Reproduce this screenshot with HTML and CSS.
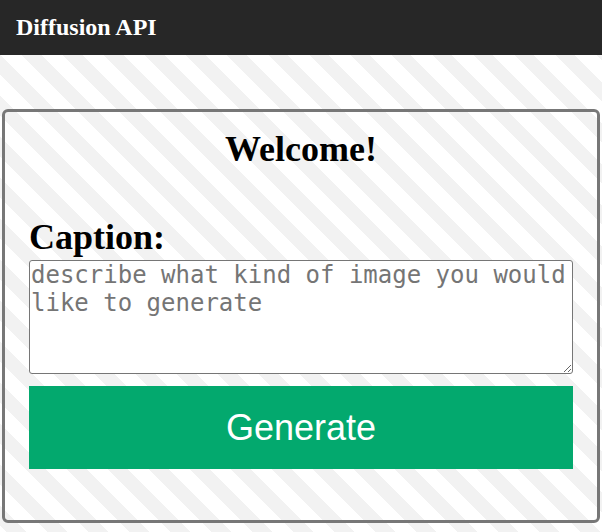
FILE: index.html
```html
<!DOCTYPE html>
<html lang="en">
<head>
<meta charset="utf-8">
<title>Diffusion API</title>
<link rel="stylesheet" href="styles.css">
</head>
<body>
<header class="topbar">Diffusion API</header>
<main class="page">
  <section class="card">
    <h1 class="welcome">Welcome!</h1>
    <label class="caption-label" for="caption">Caption:</label>
    <textarea id="caption" class="caption-input" placeholder="describe what kind of image you would like to generate"></textarea>
    <button class="generate-btn" type="button">Generate</button>
  </section>
</main>
</body>
</html>
```
FILE: styles.css
```css
html, body {
  margin: 0;
  padding: 0;
}
body {
  font-family: "Liberation Serif", "Times New Roman", serif;
  background: repeating-linear-gradient(45deg, #ffffff 0 4.8px, #f2f2f2 4.8px 18.8px, #ffffff 18.8px 29px);
  background-attachment: fixed;
  min-height: 532px;
}
.topbar {
  height: 55px;
  line-height: 55px;
  padding-left: 16px;
  background: #272727;
  color: #ffffff;
  font-weight: bold;
  font-size: 24px;
}
.page {
  padding: 54px 2px 8px 2px;
}
.card {
  border: 3px solid #777777;
  border-radius: 6px;
  padding: 17px 24px 51px 24px;
  display: flex;
  flex-direction: column;
}
.welcome {
  margin: 0;
  font-size: 36px;
  font-weight: bold;
  text-align: center;
  line-height: 40px;
}
.caption-label {
  margin-top: 48px;
  font-size: 36px;
  font-weight: bold;
  line-height: 40px;
}
.caption-input {
  margin-top: 3px;
  box-sizing: border-box;
  height: 114px;
  padding: 0 1px;
  font-family: "DejaVu Sans Mono", monospace;
  font-size: 24px;
  line-height: 28px;
  border: 1px solid #767676;
  border-radius: 3px;
  background: #ffffff;
}
.caption-input::placeholder {
  color: #757575;
}
.generate-btn {
  margin-top: 12px;
  height: 83px;
  border: none;
  border-radius: 0;
  background: #03a96e;
  color: #ffffff;
  font-family: "Liberation Sans", Arial, sans-serif;
  font-size: 36px;
  cursor: pointer;
}
```
